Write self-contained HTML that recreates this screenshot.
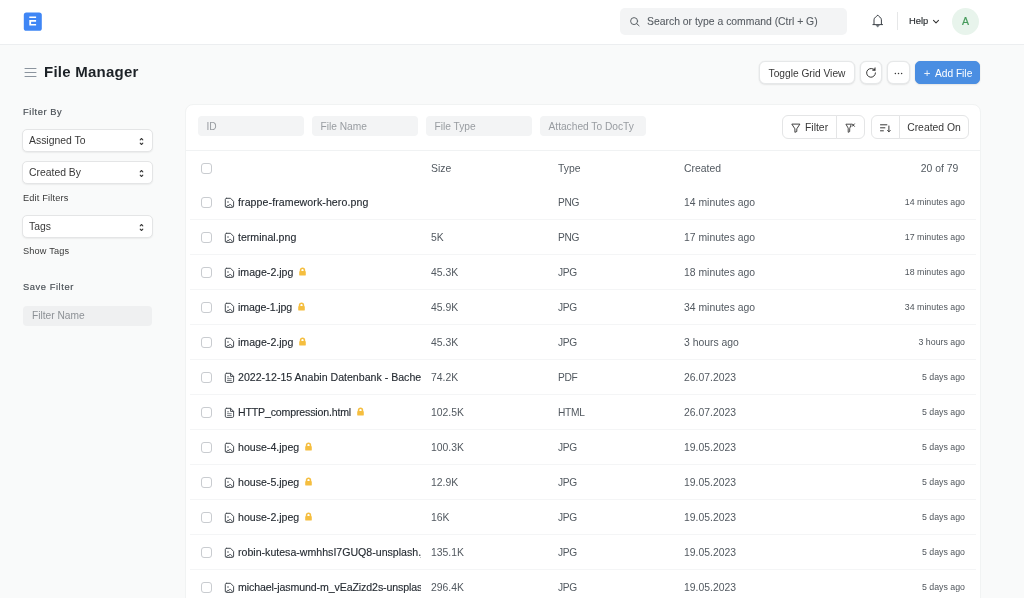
<!DOCTYPE html>
<html lang="en">
<head>
<meta charset="utf-8">
<title>File Manager</title>
<style>
*{box-sizing:border-box;margin:0;padding:0}
html,body{width:1024px;height:598px;overflow:hidden}
body{background:#f9fafa;font-family:"Liberation Sans",sans-serif;color:#383838;font-size:10.4px;position:relative}
.app{position:absolute;left:0;top:0;width:1024px;height:598px;overflow:hidden;will-change:transform;background:#f9fafa}
/* navbar */
.nav{position:absolute;left:0;top:0;width:1024px;height:45px;background:#fff;border-bottom:1px solid #eceef0}
.logo{position:absolute;left:23px;top:12px;width:20px;height:20px}
.search{position:absolute;left:620px;top:8px;width:227px;height:27px;border-radius:5px;background:#f3f4f5}
.search span{position:absolute;left:27px;top:0;line-height:27px;font-size:10.4px;color:#565c62;-webkit-text-stroke:.08px #565c62;white-space:nowrap}
.search svg{position:absolute;left:9px;top:8px;width:12px;height:12px}
.bell{position:absolute;left:871px;top:13px;width:14px;height:16px}
.vsep{position:absolute;left:897px;top:12px;width:1px;height:18px;background:#e6e7e8}
.help{position:absolute;left:909px;top:0;line-height:42px;font-size:9.4px;color:#2b2f33;-webkit-text-stroke:.15px #2b2f33}
.chev{position:absolute;left:932px;top:19px;width:8px;height:6px}
.avatar{position:absolute;left:952px;top:8px;width:27px;height:27px;border-radius:50%;background:#e8f4ec;color:#459a5b;-webkit-text-stroke:.2px #459a5b;font-size:10.5px;text-align:center;line-height:27px}
/* page head */
.burger{position:absolute;left:24px;top:67px;width:13px;height:11px}
.title{position:absolute;left:44px;top:60px;font-size:15px;font-weight:bold;color:#1c2126;line-height:24px;white-space:nowrap;letter-spacing:.25px}
.btn{position:absolute;top:61px;height:23px;border-radius:6px;background:#fff;border:1px solid #e6e8e9;font-size:10.2px;line-height:21px;padding-top:1px;text-align:center;color:#383838;white-space:nowrap;box-shadow:0 0 0 .5px rgba(0,0,0,.035),0 1px 2px rgba(0,0,0,.07)}
.btn.primary{background:#4a8ee2;border-color:#4a8ee2;color:#fff}
/* sidebar */
.slabel{position:absolute;left:23px;font-size:9.3px;letter-spacing:.58px;color:#4b5157;-webkit-text-stroke:.18px #4b5157;line-height:14px;white-space:nowrap}
.sel{position:absolute;left:22px;width:131px;height:23px;border-radius:5px;background:#fff;border:1px solid #e4e5e6;font-size:10.4px;line-height:20px;padding-top:1px;padding-left:6px;color:#383838;box-shadow:0 1px 1.500px rgba(0,0,0,.06)}
.sel svg{position:absolute;right:7.900px;top:6.800px;width:5px;height:9px}
.slink{position:absolute;left:23px;font-size:9.2px;letter-spacing:.17px;color:#383838;line-height:14px;white-space:nowrap}
.finput{position:absolute;left:23px;top:306px;width:129px;height:20px;border-radius:4px;background:#eff0f1;font-size:10.2px;line-height:19px;padding-left:9px;color:#8d9196}
/* card */
.card{position:absolute;left:185px;top:104px;width:796px;height:520px;background:#fff;border:1px solid #f1f3f3;border-radius:8px}
.ff{position:absolute;top:116px;width:106px;height:20px;border-radius:4px;background:#f3f4f5;font-size:10.2px;line-height:22px;padding-left:8.500px;color:#989ca1;white-space:nowrap;overflow:hidden}
.gbtn{position:absolute;top:115px;height:24px;background:#fff;border:1px solid #e4e5e6;font-size:10.4px;line-height:24px;color:#383838;white-space:nowrap}
.hdiv{position:absolute;left:186px;top:150px;width:794px;height:1px;background:#f0f2f3}
.hrow{position:absolute;left:190px;top:150px;width:786px;height:34px;color:#4a4f55}
.row{position:absolute;left:190px;width:786px;height:36px;border-bottom:1px solid #f4f5f6;color:#383838}
.cb{position:absolute;left:11px;top:13px;width:11px;height:11px;border:1px solid #c9ccd0;border-radius:3px;background:#fff}
.ficon{position:absolute;left:34px;top:13px;width:11px;height:12px}
.fname{position:absolute;left:48px;top:0;width:182.500px;height:35px;line-height:36px;white-space:nowrap;overflow:hidden;color:#262c33}
.fn{font-size:10.6px;-webkit-text-stroke:.13px #262c33}
.lock{display:inline-block;width:7px;height:9px;margin-left:6px;vertical-align:0px}
.c{position:absolute;top:1px;line-height:36px;white-space:nowrap;color:#525960}
.size{left:241px}.type{left:368px;font-size:10.2px;letter-spacing:-.3px}.created{left:494px}
.ago{position:absolute;right:11px;top:0;line-height:36px;font-size:8.8px;color:#4f555b;white-space:nowrap}
.cnt{position:absolute;right:17.600px;top:1px;line-height:36px;font-size:10.4px;color:#525960}
</style>
</head>
<body>
<div class="app">
<div class="nav">
  <svg class="logo" viewBox="0 0 20 20"><rect x=".8" y=".5" width="18" height="18.300" rx="2.600" fill="#3f86f5"/><path d="M6.300 4.600h6.800v1.500H6.300zM6.300 8.100h6.800v1.700H8.100v2.100h5v1.700H6.300z" fill="#fff"/></svg>
  <div class="search"><svg viewBox="0 0 12 12" fill="none" stroke="#5d6368" stroke-width="1" stroke-linecap="round"><circle cx="5.100" cy="5.100" r="3.500"/><path d="M7.700 7.700l2.400 2.100"/></svg><span>Search or type a command (Ctrl + G)</span></div>
  <svg class="bell" viewBox="0 0 14 16" fill="none" stroke="#3a3f45" stroke-width="1" stroke-linejoin="round" stroke-linecap="round"><path d="M6.700 2.300C5.700 3.700 3 4.300 3 6.800V11.300M6.700 2.300C7.700 3.700 10.400 4.300 10.400 6.800V11.300M1.900 11.600H11.500"/><path d="M4.900 12L6.700 14.200L8.500 12Z" fill="#6b7177" stroke="#6b7177" stroke-width=".5"/></svg>
  <div class="vsep"></div>
  <div class="help">Help</div>
  <svg class="chev" viewBox="0 0 8 6" fill="none" stroke="#383838" stroke-width="1.100" stroke-linecap="round" stroke-linejoin="round"><path d="M1.500 1.300l2.500 2.500 2.500-2.500"/></svg>
  <div class="avatar">A</div>
</div>

<svg class="burger" viewBox="0 0 13 11" stroke="#8b949e" stroke-width="1" stroke-linecap="round"><path d="M1 1.500h11M1 5.500h11M1 9.500h11"/></svg>
<div class="title">File Manager</div>

<div class="btn" style="left:759px;width:96px">Toggle Grid View</div>
<div class="btn" style="left:860px;width:22px"><svg viewBox="0 0 12 12" width="12" height="12" style="position:absolute;left:5px;top:5px" fill="none" stroke="#383838" stroke-width="1" stroke-linecap="round" stroke-linejoin="round"><path d="M9.450 5.900A4.400 4.400 0 1 1 7.300 2.050"/><path d="M9.300 .7V3.700L6.500 3.400Z" fill="#383838" stroke-width=".4"/></svg></div>
<div class="btn" style="left:887px;width:23px"><svg viewBox="0 0 12 12" width="11" height="11" style="position:absolute;left:5px;top:6px" fill="#383838"><circle cx="2.600" cy="6" r=".8"/><circle cx="6" cy="6" r=".8"/><circle cx="9.400" cy="6" r=".8"/></svg></div>
<div class="btn primary" style="left:915px;width:65px;border-radius:5px;padding-left:1px"><span style="font-size:11.500px;margin-right:4.500px;position:relative;top:0px;opacity:.88">+</span>Add File</div>

<!-- sidebar -->
<div class="slabel" style="top:105px">Filter By</div>
<div class="sel" style="top:129px">Assigned To<svg viewBox="0 0 5 9" fill="none" stroke="#383838" stroke-width="1.100" stroke-linecap="round" stroke-linejoin="round"><path d="M1.200 2.800L2.500 1.500L3.800 2.800M1.200 6.200L2.500 7.500L3.800 6.200"/></svg></div>
<div class="sel" style="top:161px">Created By<svg viewBox="0 0 5 9" fill="none" stroke="#383838" stroke-width="1.100" stroke-linecap="round" stroke-linejoin="round"><path d="M1.200 2.800L2.500 1.500L3.800 2.800M1.200 6.200L2.500 7.500L3.800 6.200"/></svg></div>
<div class="slink" style="top:191px">Edit Filters</div>
<div class="sel" style="top:215px">Tags<svg viewBox="0 0 5 9" fill="none" stroke="#383838" stroke-width="1.100" stroke-linecap="round" stroke-linejoin="round"><path d="M1.200 2.800L2.500 1.500L3.800 2.800M1.200 6.200L2.500 7.500L3.800 6.200"/></svg></div>
<div class="slink" style="top:244px">Show Tags</div>
<div class="slabel" style="top:280px">Save Filter</div>
<div class="finput">Filter Name</div>

<!-- card -->
<div class="card"></div>
<div class="ff" style="left:198px">ID</div>
<div class="ff" style="left:312px">File Name</div>
<div class="ff" style="left:426px">File Type</div>
<div class="ff" style="left:540px">Attached To DocTy</div>

<div class="gbtn" style="left:782px;width:55px;border-radius:6px 0 0 6px;padding-left:22px"><svg viewBox="0 0 12 12" width="12" height="12" style="position:absolute;left:7px;top:6px" fill="none" stroke="#383838" stroke-width=".95" stroke-linejoin="round"><path d="M1.800 2.100H9.900L6.800 6.800V9.500L4.900 10.300V6.800Z"/></svg>Filter</div>
<div class="gbtn" style="left:836px;width:29px;border-radius:0 6px 6px 0"><svg viewBox="0 0 12 12" width="12" height="12" style="position:absolute;left:8px;top:6px" fill="none" stroke="#383838" stroke-width=".9" stroke-linejoin="round" stroke-linecap="round"><path d="M1.300 2.200H6.300L4.700 6.500V9.600L3.200 10.300V6.500Z"/><path d="M7.200 1.900l2.200 2.400M9.400 1.900l-2.200 2.400" stroke-width="1"/></svg></div>
<div class="gbtn" style="left:871px;width:29px;border-radius:6px 0 0 6px"><svg viewBox="0 0 12 12" width="12" height="12" style="position:absolute;left:7px;top:6px" fill="none" stroke="#383838" stroke-width="1" stroke-linecap="round" stroke-linejoin="round"><path d="M1.500 2.800h6.400M1.500 5.800h4.400M1.500 8.800h2.900M9.900 4v5.700M8.600 8.500l1.300 1.300 1.300-1.300"/></svg></div>
<div class="gbtn" style="left:899px;width:70px;border-radius:0 6px 6px 0;text-align:center">Created On</div>

<div class="hdiv"></div>
<div class="hrow">
  <span class="cb"></span>
  <span class="c size" style="line-height:35px">Size</span><span class="c type" style="letter-spacing:0;font-size:10.400px;line-height:35px">Type</span><span class="c created" style="line-height:35px">Created</span>
  <span class="cnt" style="line-height:35px">20 of 79</span>
</div>
<div class="row" style="top:184px">
<span class="cb"></span><svg class="ficon" viewBox="0 0 11 12" fill="none" stroke="#474d53" stroke-width="1" stroke-linejoin="round" stroke-linecap="round"><path d="M2.500 1.300H6.600L9.600 4.400V9.200Q9.600 10.400 8.400 10.400H2.500Q1.300 10.400 1.300 9.200V2.500Q1.300 1.300 2.500 1.300Z"/><circle cx="4" cy="4.900" r=".75" fill="#474d53" stroke="none"/><path d="M2.600 9.700C2.800 8.300 4.400 7.800 5.200 8.800M4.700 8.200C5.500 6.800 7.300 6.900 8.300 9.600"/></svg><span class="fname"><span class="fn" style="letter-spacing:0.08px">frappe-framework-hero.png</span></span>
<span class="c size"></span><span class="c type">PNG</span><span class="c created">14 minutes ago</span><span class="ago">14 minutes ago</span></div>
<div class="row" style="top:219px">
<span class="cb"></span><svg class="ficon" viewBox="0 0 11 12" fill="none" stroke="#474d53" stroke-width="1" stroke-linejoin="round" stroke-linecap="round"><path d="M2.500 1.300H6.600L9.600 4.400V9.200Q9.600 10.400 8.400 10.400H2.500Q1.300 10.400 1.300 9.200V2.500Q1.300 1.300 2.500 1.300Z"/><circle cx="4" cy="4.900" r=".75" fill="#474d53" stroke="none"/><path d="M2.600 9.700C2.800 8.300 4.400 7.800 5.200 8.800M4.700 8.200C5.500 6.800 7.300 6.900 8.300 9.600"/></svg><span class="fname"><span class="fn">terminal.png</span></span>
<span class="c size">5K</span><span class="c type">PNG</span><span class="c created">17 minutes ago</span><span class="ago">17 minutes ago</span></div>
<div class="row" style="top:254px">
<span class="cb"></span><svg class="ficon" viewBox="0 0 11 12" fill="none" stroke="#474d53" stroke-width="1" stroke-linejoin="round" stroke-linecap="round"><path d="M2.500 1.300H6.600L9.600 4.400V9.200Q9.600 10.400 8.400 10.400H2.500Q1.300 10.400 1.300 9.200V2.500Q1.300 1.300 2.500 1.300Z"/><circle cx="4" cy="4.900" r=".75" fill="#474d53" stroke="none"/><path d="M2.600 9.700C2.800 8.300 4.400 7.800 5.200 8.800M4.700 8.200C5.500 6.800 7.300 6.900 8.300 9.600"/></svg><span class="fname"><span class="fn">image-2.jpg</span><svg class="lock" viewBox="0 0 7 9"><path d="M1.600 4.500V3.100a1.900 1.900 0 0 1 3.800 0V4.500" fill="none" stroke="#f5be3f" stroke-width="1.600"/><rect x=".2" y="4" width="6.600" height="4.600" rx=".9" fill="#f5be3f"/></svg></span>
<span class="c size">45.3K</span><span class="c type">JPG</span><span class="c created">18 minutes ago</span><span class="ago">18 minutes ago</span></div>
<div class="row" style="top:289px">
<span class="cb"></span><svg class="ficon" viewBox="0 0 11 12" fill="none" stroke="#474d53" stroke-width="1" stroke-linejoin="round" stroke-linecap="round"><path d="M2.500 1.300H6.600L9.600 4.400V9.200Q9.600 10.400 8.400 10.400H2.500Q1.300 10.400 1.300 9.200V2.500Q1.300 1.300 2.500 1.300Z"/><circle cx="4" cy="4.900" r=".75" fill="#474d53" stroke="none"/><path d="M2.600 9.700C2.800 8.300 4.400 7.800 5.200 8.800M4.700 8.200C5.500 6.800 7.300 6.900 8.300 9.600"/></svg><span class="fname"><span class="fn" style="letter-spacing:-0.12px">image-1.jpg</span><svg class="lock" viewBox="0 0 7 9"><path d="M1.600 4.500V3.100a1.900 1.900 0 0 1 3.800 0V4.500" fill="none" stroke="#f5be3f" stroke-width="1.600"/><rect x=".2" y="4" width="6.600" height="4.600" rx=".9" fill="#f5be3f"/></svg></span>
<span class="c size">45.9K</span><span class="c type">JPG</span><span class="c created">34 minutes ago</span><span class="ago">34 minutes ago</span></div>
<div class="row" style="top:324px">
<span class="cb"></span><svg class="ficon" viewBox="0 0 11 12" fill="none" stroke="#474d53" stroke-width="1" stroke-linejoin="round" stroke-linecap="round"><path d="M2.500 1.300H6.600L9.600 4.400V9.200Q9.600 10.400 8.400 10.400H2.500Q1.300 10.400 1.300 9.200V2.500Q1.300 1.300 2.500 1.300Z"/><circle cx="4" cy="4.900" r=".75" fill="#474d53" stroke="none"/><path d="M2.600 9.700C2.800 8.300 4.400 7.800 5.200 8.800M4.700 8.200C5.500 6.800 7.300 6.900 8.300 9.600"/></svg><span class="fname"><span class="fn">image-2.jpg</span><svg class="lock" viewBox="0 0 7 9"><path d="M1.600 4.500V3.100a1.900 1.900 0 0 1 3.800 0V4.500" fill="none" stroke="#f5be3f" stroke-width="1.600"/><rect x=".2" y="4" width="6.600" height="4.600" rx=".9" fill="#f5be3f"/></svg></span>
<span class="c size">45.3K</span><span class="c type">JPG</span><span class="c created">3 hours ago</span><span class="ago">3 hours ago</span></div>
<div class="row" style="top:359px">
<span class="cb"></span><svg class="ficon" viewBox="0 0 11 12" fill="none" stroke="#474d53" stroke-width="1" stroke-linejoin="round" stroke-linecap="round"><path d="M2.500 1.300H6.600L9.600 4.400V9.200Q9.600 10.400 8.400 10.400H2.500Q1.300 10.400 1.300 9.200V2.500Q1.300 1.300 2.500 1.300Z"/><path d="M6.600 1.300V4.400H9.600"/><path d="M3.500 4.800h1.200M3.500 6.700h3.800M3.500 8.500h3.800" stroke-width=".8" stroke="#5b6167"/></svg><span class="fname"><span class="fn">2022-12-15 Anabin Datenbank - Bachelor.pdf</span></span>
<span class="c size">74.2K</span><span class="c type">PDF</span><span class="c created">26.07.2023</span><span class="ago">5 days ago</span></div>
<div class="row" style="top:394px">
<span class="cb"></span><svg class="ficon" viewBox="0 0 11 12" fill="none" stroke="#474d53" stroke-width="1" stroke-linejoin="round" stroke-linecap="round"><path d="M2.500 1.300H6.600L9.600 4.400V9.200Q9.600 10.400 8.400 10.400H2.500Q1.300 10.400 1.300 9.200V2.500Q1.300 1.300 2.500 1.300Z"/><path d="M6.600 1.300V4.400H9.600"/><path d="M3.500 4.800h1.200M3.500 6.700h3.800M3.500 8.500h3.800" stroke-width=".8" stroke="#5b6167"/></svg><span class="fname"><span class="fn" style="letter-spacing:-0.17px">HTTP_compression.html</span><svg class="lock" viewBox="0 0 7 9"><path d="M1.600 4.500V3.100a1.900 1.900 0 0 1 3.800 0V4.500" fill="none" stroke="#f5be3f" stroke-width="1.600"/><rect x=".2" y="4" width="6.600" height="4.600" rx=".9" fill="#f5be3f"/></svg></span>
<span class="c size">102.5K</span><span class="c type">HTML</span><span class="c created">26.07.2023</span><span class="ago">5 days ago</span></div>
<div class="row" style="top:429px">
<span class="cb"></span><svg class="ficon" viewBox="0 0 11 12" fill="none" stroke="#474d53" stroke-width="1" stroke-linejoin="round" stroke-linecap="round"><path d="M2.500 1.300H6.600L9.600 4.400V9.200Q9.600 10.400 8.400 10.400H2.500Q1.300 10.400 1.300 9.200V2.500Q1.300 1.300 2.500 1.300Z"/><circle cx="4" cy="4.900" r=".75" fill="#474d53" stroke="none"/><path d="M2.600 9.700C2.800 8.300 4.400 7.800 5.200 8.800M4.700 8.200C5.500 6.800 7.300 6.900 8.300 9.600"/></svg><span class="fname"><span class="fn">house-4.jpeg</span><svg class="lock" viewBox="0 0 7 9"><path d="M1.600 4.500V3.100a1.900 1.900 0 0 1 3.800 0V4.500" fill="none" stroke="#f5be3f" stroke-width="1.600"/><rect x=".2" y="4" width="6.600" height="4.600" rx=".9" fill="#f5be3f"/></svg></span>
<span class="c size">100.3K</span><span class="c type">JPG</span><span class="c created">19.05.2023</span><span class="ago">5 days ago</span></div>
<div class="row" style="top:464px">
<span class="cb"></span><svg class="ficon" viewBox="0 0 11 12" fill="none" stroke="#474d53" stroke-width="1" stroke-linejoin="round" stroke-linecap="round"><path d="M2.500 1.300H6.600L9.600 4.400V9.200Q9.600 10.400 8.400 10.400H2.500Q1.300 10.400 1.300 9.200V2.500Q1.300 1.300 2.500 1.300Z"/><circle cx="4" cy="4.900" r=".75" fill="#474d53" stroke="none"/><path d="M2.600 9.700C2.800 8.300 4.400 7.800 5.200 8.800M4.700 8.200C5.500 6.800 7.300 6.900 8.300 9.600"/></svg><span class="fname"><span class="fn">house-5.jpeg</span><svg class="lock" viewBox="0 0 7 9"><path d="M1.600 4.500V3.100a1.900 1.900 0 0 1 3.800 0V4.500" fill="none" stroke="#f5be3f" stroke-width="1.600"/><rect x=".2" y="4" width="6.600" height="4.600" rx=".9" fill="#f5be3f"/></svg></span>
<span class="c size">12.9K</span><span class="c type">JPG</span><span class="c created">19.05.2023</span><span class="ago">5 days ago</span></div>
<div class="row" style="top:499px">
<span class="cb"></span><svg class="ficon" viewBox="0 0 11 12" fill="none" stroke="#474d53" stroke-width="1" stroke-linejoin="round" stroke-linecap="round"><path d="M2.500 1.300H6.600L9.600 4.400V9.200Q9.600 10.400 8.400 10.400H2.500Q1.300 10.400 1.300 9.200V2.500Q1.300 1.300 2.500 1.300Z"/><circle cx="4" cy="4.900" r=".75" fill="#474d53" stroke="none"/><path d="M2.600 9.700C2.800 8.300 4.400 7.800 5.200 8.800M4.700 8.200C5.500 6.800 7.300 6.900 8.300 9.600"/></svg><span class="fname"><span class="fn">house-2.jpeg</span><svg class="lock" viewBox="0 0 7 9"><path d="M1.600 4.500V3.100a1.900 1.900 0 0 1 3.800 0V4.500" fill="none" stroke="#f5be3f" stroke-width="1.600"/><rect x=".2" y="4" width="6.600" height="4.600" rx=".9" fill="#f5be3f"/></svg></span>
<span class="c size">16K</span><span class="c type">JPG</span><span class="c created">19.05.2023</span><span class="ago">5 days ago</span></div>
<div class="row" style="top:534px">
<span class="cb"></span><svg class="ficon" viewBox="0 0 11 12" fill="none" stroke="#474d53" stroke-width="1" stroke-linejoin="round" stroke-linecap="round"><path d="M2.500 1.300H6.600L9.600 4.400V9.200Q9.600 10.400 8.400 10.400H2.500Q1.300 10.400 1.300 9.200V2.500Q1.300 1.300 2.500 1.300Z"/><circle cx="4" cy="4.900" r=".75" fill="#474d53" stroke="none"/><path d="M2.600 9.700C2.800 8.300 4.400 7.800 5.200 8.800M4.700 8.200C5.500 6.800 7.300 6.900 8.300 9.600"/></svg><span class="fname"><span class="fn">robin-kutesa-wmhhsI7GUQ8-unsplash.jpg</span></span>
<span class="c size">135.1K</span><span class="c type">JPG</span><span class="c created">19.05.2023</span><span class="ago">5 days ago</span></div>
<div class="row" style="top:569px">
<span class="cb"></span><svg class="ficon" viewBox="0 0 11 12" fill="none" stroke="#474d53" stroke-width="1" stroke-linejoin="round" stroke-linecap="round"><path d="M2.500 1.300H6.600L9.600 4.400V9.200Q9.600 10.400 8.400 10.400H2.500Q1.300 10.400 1.300 9.200V2.500Q1.300 1.300 2.500 1.300Z"/><circle cx="4" cy="4.900" r=".75" fill="#474d53" stroke="none"/><path d="M2.600 9.700C2.800 8.300 4.400 7.800 5.200 8.800M4.700 8.200C5.500 6.800 7.300 6.900 8.300 9.600"/></svg><span class="fname"><span class="fn" style="letter-spacing:-0.1px">michael-jasmund-m_vEaZizd2s-unsplash.jpg</span></span>
<span class="c size">296.4K</span><span class="c type">JPG</span><span class="c created">19.05.2023</span><span class="ago">5 days ago</span></div>
</div>
</body>
</html>
